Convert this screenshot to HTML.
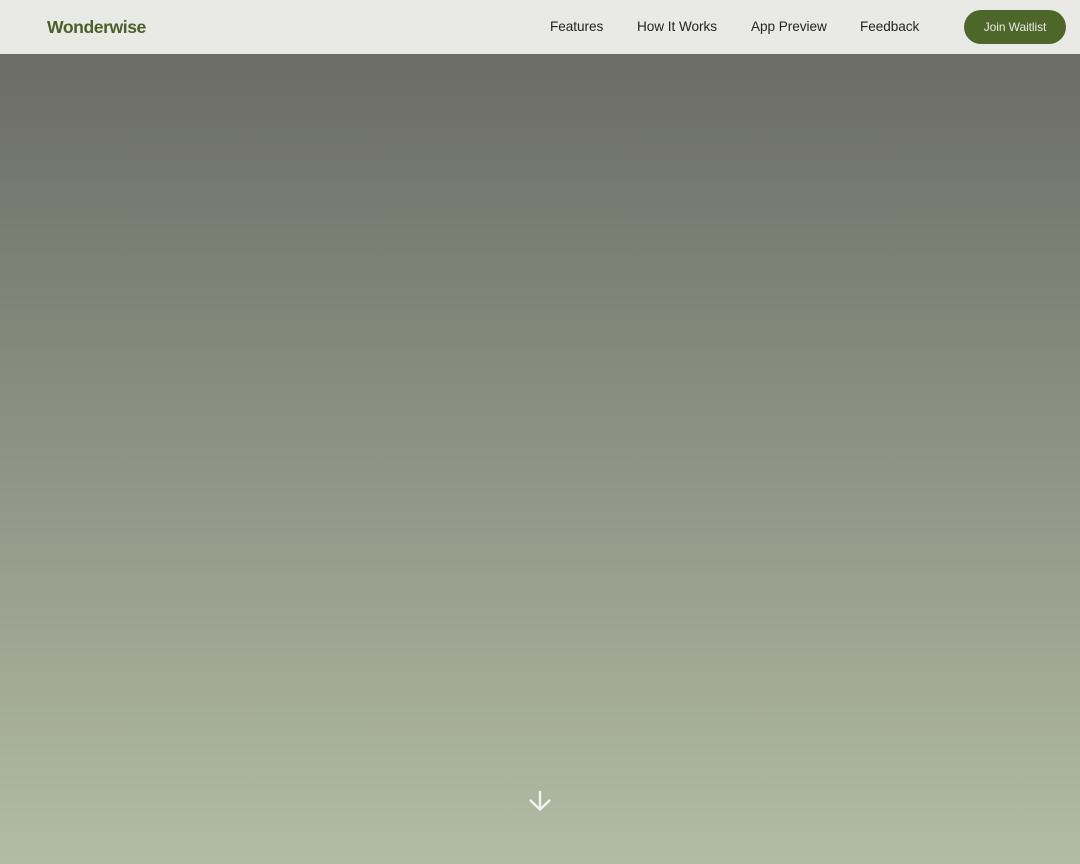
<!DOCTYPE html>
<html>
<head>
<meta charset="utf-8">
<style>
html,body{margin:0;padding:0;width:1080px;height:864px;overflow:hidden;font-family:"Liberation Sans",sans-serif;}
.hero{position:absolute;left:0;top:0;width:1080px;height:864px;background:linear-gradient(180deg,#666761 0%,#b2bca4 100%);}
.nav{position:absolute;left:0;top:0;width:1080px;height:54px;background:#e9eae6;}
.logo{position:absolute;left:47px;top:17px;font-size:17.6px;letter-spacing:-0.44px;line-height:21px;font-weight:700;color:#4a5f2a;white-space:nowrap;}
.link{position:absolute;top:18px;font-size:13.6px;letter-spacing:-0.05px;line-height:17px;color:#22241f;white-space:nowrap;}
.btn{position:absolute;left:964px;top:10px;width:102px;height:34px;border-radius:17px;background:#4d6629;color:#e9eae6;font-size:12px;letter-spacing:-0.08px;line-height:34px;text-align:center;white-space:nowrap;}
svg{position:absolute;left:528px;top:789px;}
</style>
</head>
<body>
<div class="hero"></div>
<div class="nav">
<div class="logo">Wonderwise</div>
<div class="link" style="left:550px">Features</div>
<div class="link" style="left:637px">How It Works</div>
<div class="link" style="left:751px">App Preview</div>
<div class="link" style="left:860px">Feedback</div>
<div class="btn">Join Waitlist</div>
</div>
<svg width="24" height="24" viewBox="0 0 24 24" fill="none" stroke="#f2f4ee" stroke-width="2.4" stroke-linecap="round" stroke-linejoin="round"><path d="M12 3V20.5"/><path d="M2.5 11.5L12 20.5L21.5 11.5"/></svg>
</body>
</html>
